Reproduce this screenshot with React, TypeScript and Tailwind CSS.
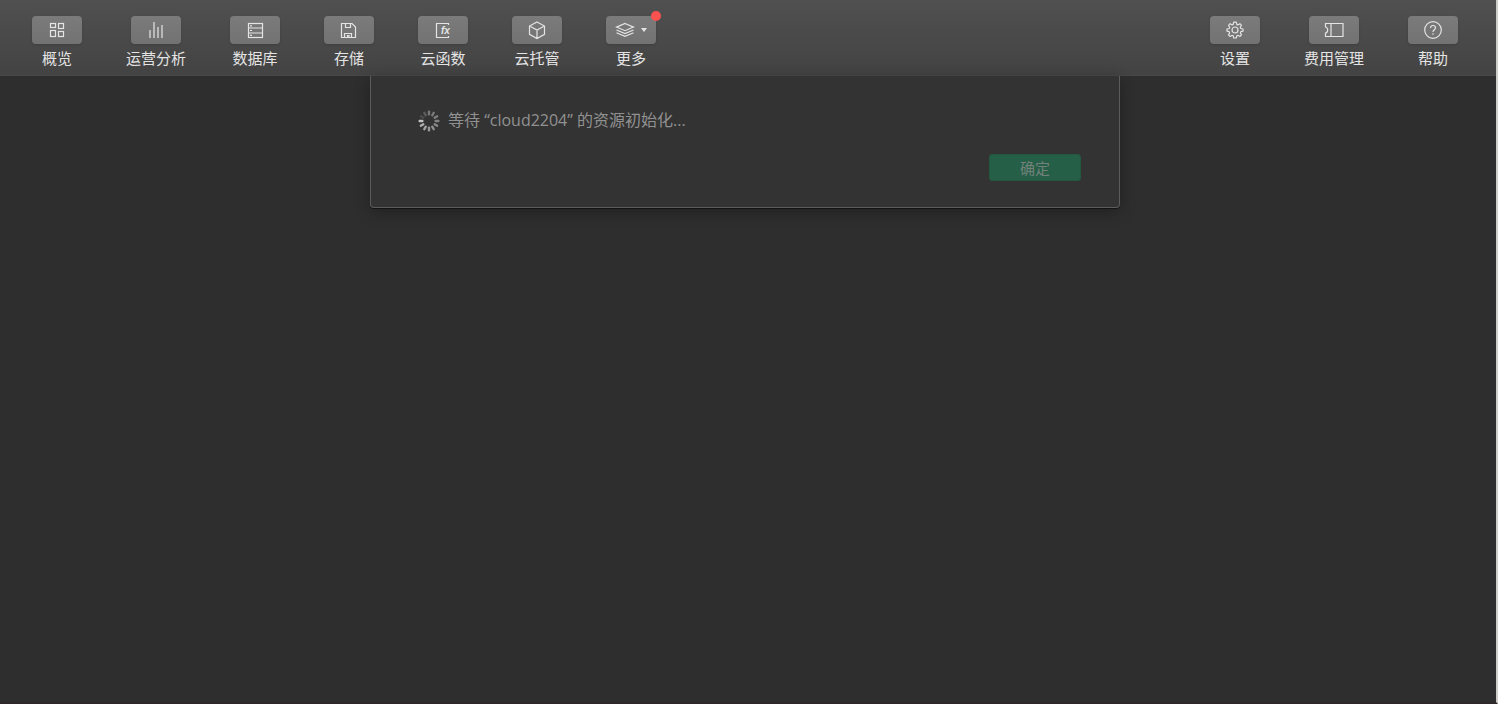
import type { ReactNode } from 'react';

interface ToolItem {
  id: string;
  label: string;
  icon: ReactNode;
  dropdown?: boolean;
  badge?: boolean;
}

function Icon({ children }: { children: ReactNode }) {
  return (
    <svg
      width="20"
      height="20"
      viewBox="0 0 20 20"
      fill="none"
      stroke="currentColor"
      strokeWidth={1.2}
      aria-hidden="true"
    >
      {children}
    </svg>
  );
}

const LEFT_ITEMS: ToolItem[] = [
  {
    id: 'overview',
    label: '概览',
    icon: (
      <Icon>
        <rect x="3.5" y="3.5" width="5" height="4" />
        <rect x="11.5" y="3.5" width="5" height="5" />
        <rect x="3.5" y="10.5" width="5" height="6" />
        <rect x="11.5" y="11.5" width="5" height="5" />
      </Icon>
    )
  },
  {
    id: 'analytics',
    label: '运营分析',
    icon: (
      <Icon>
        <path d="M4 10v8M8 2v16M12 7v11M16 5v13" />
      </Icon>
    )
  },
  {
    id: 'database',
    label: '数据库',
    icon: (
      <Icon>
        <rect x="3.5" y="3.5" width="14" height="14" />
        <path d="M3.5 8h14M3.5 13h14" />
        <path d="M5 5.8h2M5 10.5h2M5 15.3h2" />
      </Icon>
    )
  },
  {
    id: 'storage',
    label: '存储',
    icon: (
      <Icon>
        <path d="M2.5 3.5H13l3.5 3.5v10.5h-14z" />
        <path d="M6.5 3.5v4h5v-4M5.5 17.5v-4h7v4M8.5 17.5v-2H10v2" />
      </Icon>
    )
  },
  {
    id: 'functions',
    label: '云函数',
    icon: (
      <Icon>
        <path d="M15.5 5V3.5h-12v14h12V16" />
        <text
          x="8"
          y="14"
          fill="currentColor"
          stroke="none"
          className="font-['Liberation_Sans',sans-serif] text-[10px] font-bold italic"
        >
          fx
        </text>
      </Icon>
    )
  },
  {
    id: 'hosting',
    label: '云托管',
    icon: (
      <Icon>
        <path d="M10 2l7.500 4v8.300L10 18.500l-7.500-4.200V6zM2.500 6l7.500 4 7.500-4M10 10v8.500" />
      </Icon>
    )
  },
  {
    id: 'more',
    label: '更多',
    dropdown: true,
    badge: true,
    icon: (
      <Icon>
        <path d="M10 3.500l8.500 3.600-8.500 3.600-8.500-3.600zM1.500 10l8.500 3.600 8.500-3.600M1.500 12.800l8.500 3.600 8.500-3.600" />
      </Icon>
    )
  }
];

const RIGHT_ITEMS: ToolItem[] = [
  {
    id: 'settings',
    label: '设置',
    icon: (
      <Icon>
        <path
          strokeLinejoin="round"
          d="M8.700 2.200h2.600l.5 2.200 1.100.5 2-1.200 1.600 1.600-1.200 2 .5 1.200 2.200.5v2.200l-2.200.5-.5 1.200 1.200 2-1.600 1.600-2-1.200-1.100.5-.5 2.200H8.700l-.5-2.200-1.100-.5-2 1.200-1.600-1.600 1.200-2-.5-1.200L2 11.200V9l2.200-.5.5-1.200-1.200-2 1.600-1.600 2 1.200 1.100-.5z"
        />
        <circle cx="10" cy="10" r="3" />
      </Icon>
    )
  },
  {
    id: 'billing',
    label: '费用管理',
    icon: (
      <Icon>
        <path d="M1.500 3.500h17.500v13H1.500v-3.500c1.300-.3 2.200-1.500 2.200-3s-.9-2.700-2.200-3zM7 3.500v13" />
      </Icon>
    )
  },
  {
    id: 'help',
    label: '帮助',
    icon: (
      <Icon>
        <circle cx="10" cy="10" r="8.300" />
        <path d="M7.500 8c0-1.500 1-2.500 2.500-2.500s2.500 1 2.500 2.300c0 2-2.500 2-2.500 4.200M10 13.300v1.400" />
      </Icon>
    )
  }
];

function ToolButton({ item }: { item: ToolItem }) {
  return (
    <button type="button" className="flex flex-col items-center gap-1 text-[#e4e4e4]">
      <span className="relative flex h-7 w-[50px] items-center justify-center gap-1.5 rounded bg-linear-to-b from-[#7b7b7b] to-[#727272] shadow-sm">
        {item.icon}
        {item.dropdown && (
          <svg width="6" height="4" viewBox="0 0 6 4" fill="currentColor" aria-hidden="true">
            <path d="M0 0h6L3 4z" />
          </svg>
        )}
        {item.badge && (
          <span className="absolute -top-[5px] -right-[5px] h-2.5 w-2.5 rounded-full bg-[#fa5151]" />
        )}
      </span>
      <span className="text-[15px] leading-5">{item.label}</span>
    </button>
  );
}

const SPOKES = [0.45, 0.47, 0.5, 0.53, 0.57, 0.62, 0.68, 0.74, 0.82, 0.95, 0.18, 0.28];

function Spinner() {
  return (
    <svg width="22" height="22" viewBox="0 0 22 22" aria-hidden="true">
      {SPOKES.map((opacity, idx) => (
        <rect
          key={idx}
          x="9.8"
          y="0.5"
          width="2.4"
          height="5"
          rx="1"
          fill="#cacaca"
          opacity={opacity}
          transform={`rotate(${idx * 30} 11 11)`}
        />
      ))}
    </svg>
  );
}

export default function App() {
  return (
    <div className="flex min-h-screen flex-col border-r-2 border-b-2 border-r-[#cfcdca] border-b-[#2f282a] bg-[#2e2e2e] font-['Open_Sans','Noto_Sans_CJK_SC',sans-serif]">
      {/* Toolbar */}
      <header className="flex h-[76px] items-start justify-between border-b border-[#484848] bg-linear-to-b from-[#505050] to-[#434343] pt-4 pr-[38px] pl-8">
        <nav className="flex gap-11">
          {LEFT_ITEMS.map(item => (
            <ToolButton key={item.id} item={item} />
          ))}
        </nav>
        <nav className="flex gap-11">
          {RIGHT_ITEMS.map(item => (
            <ToolButton key={item.id} item={item} />
          ))}
        </nav>
      </header>

      {/* Init dialog */}
      <main className="flex justify-center pr-1.5">
        <section
          role="dialog"
          aria-labelledby="init-message"
          className="flex w-full max-w-[750px] flex-col gap-[22px] rounded-b border border-t-0 border-[#5c5c5c] bg-[#333333] px-[38px] pt-8 pb-[26px] shadow-[0_1px_0_#141414,0_4px_16px_rgba(0,0,0,0.3)]"
        >
          <div className="flex items-end gap-2 pl-[9px] text-[#919191]">
            <Spinner />
            <p id="init-message" className="text-[16px] leading-6">
              等待 “cloud2204” 的资源初始化...
            </p>
          </div>
          <button
            type="button"
            disabled
            className="h-[27px] w-[92px] self-end rounded-[3px] border border-[#23583f] bg-[#265f47] text-[15px] leading-5 text-[#72827b]"
          >
            确定
          </button>
        </section>
      </main>
    </div>
  );
}
